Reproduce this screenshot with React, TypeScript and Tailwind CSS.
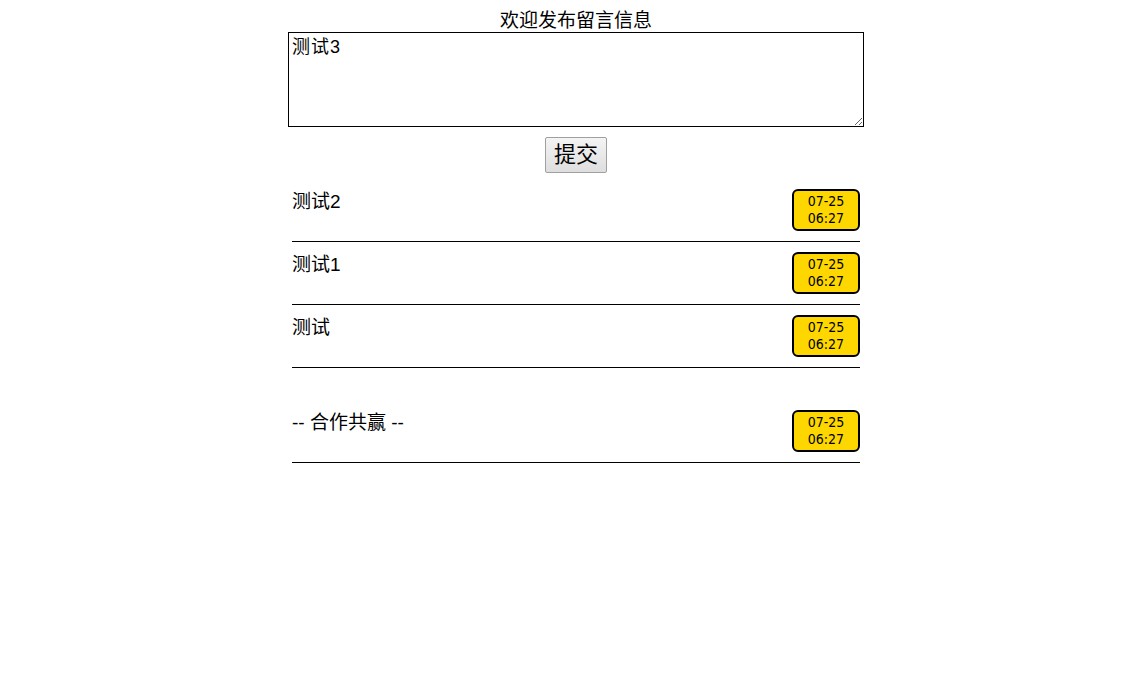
import { useState } from 'react';

const messages = [
  { text: '测试2', time: ['07-25', '06:27'] },
  { text: '测试1', time: ['07-25', '06:27'] },
  { text: '测试', time: ['07-25', '06:27'] },
];

function TimeBadge({ time }: { time: string[] }) {
  return (
    <div className="w-[68px] h-[42px] shrink-0 flex flex-col items-center justify-center bg-[#ffd700] border-2 border-black rounded-[6px] text-[14px] leading-[17px] text-black font-stretch-condensed font-['DejaVu_Sans_Condensed','DejaVu_Sans',sans-serif]">
      <span>{time[0]}</span>
      <span>{time[1]}</span>
    </div>
  );
}

function MessageRow({ text, time }: { text: string; time: string[] }) {
  return (
    <div className="flex justify-between items-start py-[10px] border-b border-black">
      <span className="text-[19px] leading-[24px] pt-px">{text}</span>
      <TimeBadge time={time} />
    </div>
  );
}

export default function App() {
  const [value, setValue] = useState('测试3');

  return (
    <div className="min-h-screen bg-white text-black font-['Liberation_Sans','Noto_Sans_CJK_SC',sans-serif]">
      <div className="w-[576px] ml-[288px] pt-[9px]">
        {/* Header */}
        <h1 className="text-center text-[19px] leading-[23px] font-normal">欢迎发布留言信息</h1>

        {/* Form */}
        <textarea
          value={value}
          onChange={(e) => setValue(e.target.value)}
          className="block w-full h-[95px] border border-black px-[3px] py-[2px] text-[18px] leading-[24px] tracking-[1px] outline-none resize-y"
        />
        <div className="flex justify-center mt-[10px]">
          <button className="w-[62px] h-[36px] text-[22px] leading-[26px] bg-gradient-to-b from-[#f4f4f4] to-[#dedede] border border-[#a0a0a0] rounded-[2px]">
            提交
          </button>
        </div>

        {/* List */}
        <div className="px-[4px] mt-[6px]">
          {messages.map((m, i) => (
            <MessageRow key={i} text={m.text} time={m.time} />
          ))}
          <div className="mt-[32px]">
            <MessageRow text="-- 合作共赢 --" time={['07-25', '06:27']} />
          </div>
        </div>
      </div>
    </div>
  );
}
